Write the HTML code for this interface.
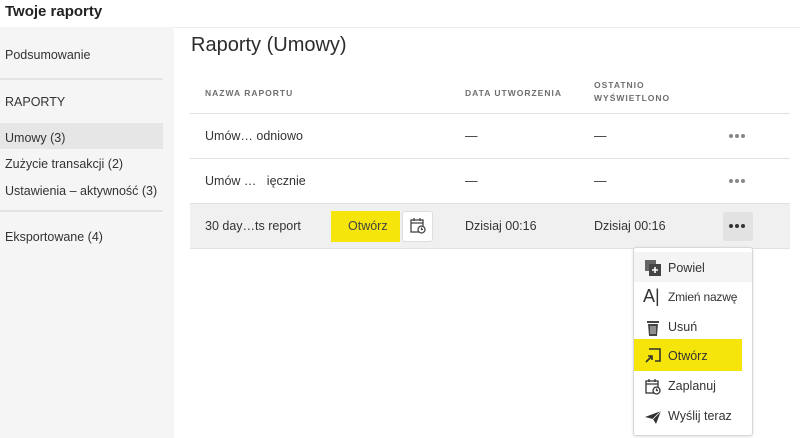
<!DOCTYPE html>
<html><head><meta charset="utf-8"><style>
*{margin:0;padding:0;box-sizing:border-box}
body{width:800px;height:438px;overflow:hidden;background:#fff;font-family:"Liberation Sans",sans-serif;color:#2c2c2c;position:relative}
.a{position:absolute;white-space:nowrap}
.side{position:absolute;left:0;top:27px;width:174px;height:411px;background:#f5f5f5}
.hr{position:absolute;height:2px;background:#e4e4e4}
.s{font-size:12.5px;color:#333}
.th{font-size:8.5px;font-weight:bold;letter-spacing:1px;color:#6e6e6e}
.td{font-size:12.5px;color:#333}
.line{position:absolute;left:190px;width:600px;height:1px;background:#e1e1e1}
.dots{position:absolute;width:20px;height:4px}
.dots i{float:left;width:4px;height:4px;border-radius:50%;background:#888;margin-right:2px}
.mi{position:absolute;left:11px;font-size:12.5px;color:#333}
.ic{position:absolute;left:10px;width:18px;height:18px}
</style></head><body>
<div class="a" style="left:5px;top:3px;font-size:15px;font-weight:bold;color:#222">Twoje raporty</div>
<div class="side"></div>
<div class="a" style="left:174px;top:27px;width:626px;height:1px;background:#eee"></div>
<div class="a s" style="left:5px;top:48px">Podsumowanie</div>
<div class="hr" style="left:0;top:78px;width:163px"></div>
<div class="a s" style="left:5px;top:95px">RAPORTY</div>
<div class="a" style="left:0;top:123px;width:163px;height:26px;background:#e6e6e6"></div>
<div class="a s" style="left:5px;top:131px">Umowy (3)</div>
<div class="a s" style="left:5px;top:157px">Zużycie transakcji (2)</div>
<div class="a s" style="left:5px;top:184px">Ustawienia – aktywność (3)</div>
<div class="hr" style="left:0;top:210px;width:163px"></div>
<div class="a s" style="left:5px;top:230px">Eksportowane (4)</div>

<div class="a" style="left:191px;top:34px;font-size:20px;color:#2c2c2c">Raporty (Umowy)</div>
<div class="a th" style="left:205px;top:88px">NAZWA RAPORTU</div>
<div class="a th" style="left:465px;top:88px">DATA UTWORZENIA</div>
<div class="a th" style="left:594px;top:79px;line-height:13px">OSTATNIO<br>WYŚWIETLONO</div>
<div class="line" style="top:113px"></div>
<div class="a td" style="left:205px;top:129px">Umów… odniowo</div>
<div class="a td" style="left:465px;top:129px">—</div>
<div class="a td" style="left:594px;top:129px">—</div>
<div class="dots" style="left:729px;top:134px"><i></i><i></i><i></i></div>
<div class="line" style="top:158px"></div>
<div class="a td" style="left:205px;top:174px">Umów …&nbsp;&nbsp; ięcznie</div>
<div class="a td" style="left:465px;top:174px">—</div>
<div class="a td" style="left:594px;top:174px">—</div>
<div class="dots" style="left:729px;top:179px"><i></i><i></i><i></i></div>
<div class="line" style="top:203px"></div>
<div class="a" style="left:190px;top:204px;width:600px;height:44px;background:#f0f0f0"></div>
<div class="line" style="top:248px"></div>
<div class="a td" style="left:205px;top:219px">30 day…ts report</div>
<div class="a" style="left:331px;top:211px;width:69px;height:31px;background:#f5e50a"></div>
<div class="a td" style="left:348px;top:219px;color:#444">Otwórz</div>
<div class="a" style="left:402px;top:211px;width:31px;height:31px;background:#fff;border:1px solid #ddd;border-radius:3px"></div>
<svg class="a" style="left:409px;top:217px" width="18" height="18" viewBox="0 0 18 18" fill="none" stroke="#444" stroke-width="1.3"><rect x="2" y="3" width="12" height="12"/><path d="M2 6h12M5 1v3M11 1v3"/><circle cx="12.5" cy="12.5" r="3.5" fill="#fff"/><path d="M12.5 10.5v2h1.5"/></svg>
<div class="a td" style="left:465px;top:219px">Dzisiaj 00:16</div>
<div class="a td" style="left:594px;top:219px">Dzisiaj 00:16</div>
<div class="a" style="left:723px;top:212px;width:30px;height:29px;background:#e2e2e2;border-radius:2px"></div>
<div class="dots" style="left:729px;top:224px"><i style="background:#333"></i><i style="background:#333"></i><i style="background:#333"></i></div>

<div class="a" style="left:633px;top:247px;width:120px;height:189px;background:#fff;border:1px solid #d8d8d8;border-radius:3px;box-shadow:0 1px 3px rgba(0,0,0,.12)">
 <div class="a" style="left:0;top:4px;width:118px;height:30px;background:#f4f4f4"></div>
 <svg class="ic" style="top:11px" viewBox="0 0 18 18"><rect x="1" y="1" width="11" height="11" fill="#666"/><rect x="5" y="5" width="12" height="12" fill="#444"/><path d="M11 8v6M8 11h6" stroke="#fff" stroke-width="1.6"/></svg>
 <div class="mi" style="left:34px;top:13px">Powiel</div>
 <div class="a" style="left:9px;top:38px;font-size:18px;color:#333">A|</div>
 <div class="mi" style="left:34px;top:42px;font-size:12px;letter-spacing:-0.2px">Zmień nazwę</div>
 <svg class="ic" style="top:71px" viewBox="0 0 18 18"><path d="M3 3h12" stroke="#444" stroke-width="2"/><path d="M4 5h10l-1 12H5z" fill="#444"/><path d="M7 7v8M9 7v8M11 7v8" stroke="#fff" stroke-width="0.8"/></svg>
 <div class="mi" style="left:34px;top:72px">Usuń</div>
 <div class="a" style="left:0;top:91px;width:108px;height:32px;background:#f5e50a"></div>
 <svg class="ic" style="top:98px" viewBox="0 0 18 18" fill="none" stroke="#333" stroke-width="1.6"><path d="M5 3h11v12h-5"/><path d="M2 16l6-6M4 10h4v4"/></svg>
 <div class="mi" style="left:34px;top:101px">Otwórz</div>
 <svg class="ic" style="top:130px" viewBox="0 0 18 18" fill="none" stroke="#333" stroke-width="1.3"><rect x="2" y="3" width="12" height="12"/><path d="M2 6h12M5 1v3M11 1v3"/><circle cx="12.5" cy="12.5" r="3.5" fill="#fff"/><path d="M12.5 10.5v2h1.5"/></svg>
 <div class="mi" style="left:34px;top:131px">Zaplanuj</div>
 <svg class="ic" style="top:160px" viewBox="0 0 18 18"><path d="M1 9l16-6-5 13-3-5z" fill="#333"/><path d="M9 11l8-8" stroke="#fff" stroke-width="0.8"/></svg>
 <div class="mi" style="left:34px;top:161px">Wyślij teraz</div>
</div>
</body></html>
